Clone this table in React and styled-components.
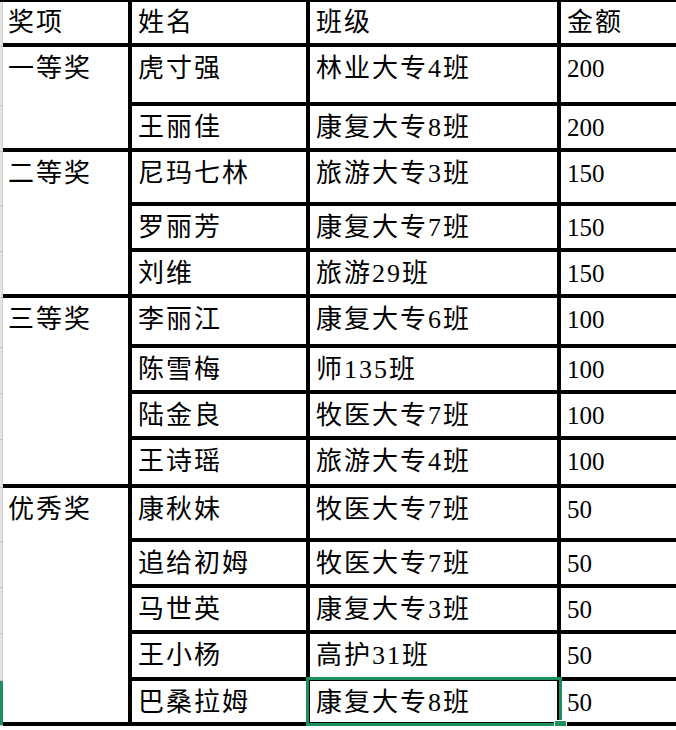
import React from "react";
import styled, { createGlobalStyle } from "styled-components";

const GlobalStyle = createGlobalStyle`
  html, body {
    margin: 0;
    padding: 0;
    background: #fff;
  }
  body {
    font-family: "Liberation Serif", "Noto Sans CJK SC", serif;
  }
`;

const Sheet = styled.div`
  display: grid;
  grid-template-columns: 3px 129px 178px 251px 1fr;
  grid-template-rows: ${props => props.$rows};
  border-top: 2px solid #000;
  width: 676px;
  color: #000;
`;

const RowHead = styled.div`
  grid-column: 1;
  grid-row: ${props => props.$row};
  background: ${props => (props.$active ? "#1d8f5f" : "#e4e4e4")};
  border-bottom: 1px solid #c4c4c4;
  border-right: ${props => (props.$active ? "0" : "1px solid #cfcfcf")};
  box-sizing: border-box;
`;

const Cell = styled.div`
  position: relative;
  grid-column: ${props => props.$col};
  grid-row: ${props => (props.$span ? `${props.$row} / span ${props.$span}` : props.$row)};
  box-sizing: border-box;
  border-bottom: 4px solid #000;
  border-right: ${props => (props.$col === 5 ? "0" : "4px solid #000")};
  padding: ${props => (props.$row === 1 ? "6px" : "7px")} 0 0 ${props => (props.$col === 2 ? "5px" : "6px")};
  font-size: ${props => (props.$num ? "25px" : "26px")};
  letter-spacing: ${props => (props.$num ? "0" : "2px")};
  line-height: 30px;
  white-space: nowrap;
`;

const Selected = styled.div`
  position: absolute;
  z-index: 2;
  top: -4px;
  left: -4px;
  right: -5px;
  bottom: -4px;
  border: 3px solid #1d8f5f;
  pointer-events: none;
`;

const Handle = styled.div`
  position: absolute;
  right: -8px;
  bottom: -8px;
  width: 11px;
  height: 10px;
  background: #1d8f5f;
  border: 1px solid #fff;
  border-bottom: 0;
`;

const groups = [
  {
    award: "一等奖",
    rows: [
      ["虎寸强", "林业大专4班", "200", 59],
      ["王丽佳", "康复大专8班", "200", 46],
    ],
  },
  {
    award: "二等奖",
    rows: [
      ["尼玛七林", "旅游大专3班", "150", 54],
      ["罗丽芳", "康复大专7班", "150", 46],
      ["刘维", "旅游29班", "150", 46],
    ],
  },
  {
    award: "三等奖",
    rows: [
      ["李丽江", "康复大专6班", "100", 50],
      ["陈雪梅", "师135班", "100", 46],
      ["陆金良", "牧医大专7班", "100", 46],
      ["王诗瑶", "旅游大专4班", "100", 48],
    ],
  },
  {
    award: "优秀奖",
    rows: [
      ["康秋妹", "牧医大专7班", "50", 54],
      ["追给初姆", "牧医大专7班", "50", 46],
      ["马世英", "康复大专3班", "50", 46],
      ["王小杨", "高护31班", "50", 47],
      ["巴桑拉姆", "康复大专8班", "50", 45],
    ],
  },
];

const header = ["奖项", "姓名", "班级", "金额"];

export default function App() {
  const heights = [45];
  groups.forEach(g => g.rows.forEach(r => heights.push(r[3])));
  const total = heights.length;

  const cells = [<RowHead key="rh1" $row={1} />];
  header.forEach((h, i) => {
    cells.push(
      <Cell key={h} $row={1} $col={i + 2}>
        {h}
      </Cell>
    );
  });

  let line = 2;
  groups.forEach(g => {
    cells.push(
      <Cell key={g.award} $col={2} $row={line} $span={g.rows.length}>
        {g.award}
      </Cell>
    );
    g.rows.forEach(([name, cls, amt]) => {
      const isLast = line === total;
      cells.push(<RowHead key={`rh${line}`} $row={line} $active={isLast} />);
      cells.push(
        <Cell key={`n${line}`} $row={line} $col={3}>
          {name}
        </Cell>
      );
      cells.push(
        <Cell key={`c${line}`} $row={line} $col={4}>
          {cls}
          {isLast && (
            <Selected>
              <Handle />
            </Selected>
          )}
        </Cell>
      );
      cells.push(
        <Cell key={`a${line}`} $row={line} $col={5} $num>
          {amt}
        </Cell>
      );
      line += 1;
    });
  });

  return (
    <>
      <GlobalStyle />
      <Sheet $rows={heights.map(h => `${h}px`).join(" ")}>{cells}</Sheet>
    </>
  );
}
